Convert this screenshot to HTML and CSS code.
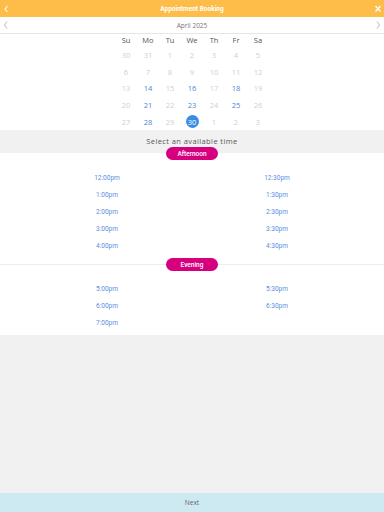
FILE: index.html
```html
<!DOCTYPE html>
<html lang="en">
<head>
  <meta charset="UTF-8">
  <title>Appointment Booking</title>
  <link rel="stylesheet" href="styles.css">
</head>
<body>
  <div class="app">
    <header class="topbar">
      <svg class="icon" width="8" height="10" viewBox="0 0 8 10"><polyline points="5.5,2 3,5 5.5,8" fill="none" stroke="#fff" stroke-width="1.1"/></svg>
      <span class="title">Appointment Booking</span>
      <svg class="icon" width="8" height="10" viewBox="0 0 8 10"><path d="M1.5 2 L6.5 7.5 M6.5 2 L1.5 7.5" stroke="#fff" stroke-width="1.3"/></svg>
    </header>

    <div class="month-bar">
      <svg width="8" height="10" viewBox="0 0 8 10"><polyline points="5,1.5 2.5,5 5,8.5" fill="none" stroke="#aaa" stroke-width="0.8"/></svg>
      <span>April 2025</span>
      <svg width="8" height="10" viewBox="0 0 8 10"><polyline points="3,1.5 5.5,5 3,8.5" fill="none" stroke="#aaa" stroke-width="0.8"/></svg>
    </div>

    <div class="calendar">
      <div class="wd">Su</div><div class="wd">Mo</div><div class="wd">Tu</div><div class="wd">We</div><div class="wd">Th</div><div class="wd">Fr</div><div class="wd">Sa</div>

      <div class="day">30</div><div class="day">31</div><div class="day">1</div><div class="day">2</div><div class="day">3</div><div class="day">4</div><div class="day">5</div>
      <div class="day">6</div><div class="day">7</div><div class="day">8</div><div class="day">9</div><div class="day">10</div><div class="day">11</div><div class="day">12</div>
      <div class="day">13</div><div class="day open">14</div><div class="day">15</div><div class="day open">16</div><div class="day">17</div><div class="day open">18</div><div class="day">19</div>
      <div class="day">20</div><div class="day open">21</div><div class="day">22</div><div class="day open">23</div><div class="day">24</div><div class="day open">25</div><div class="day">26</div>
      <div class="day">27</div><div class="day open">28</div><div class="day">29</div><div class="day"><span class="selected">30</span></div><div class="day">1</div><div class="day">2</div><div class="day">3</div>
    </div>

    <div class="band">Select an available time</div>
    <div class="divider divider-band"><span class="pill">Afternoon</span></div>

    <div class="slots">
      <a class="slot">12:00pm</a><a class="slot">12:30pm</a>
      <a class="slot">1:00pm</a><a class="slot">1:30pm</a>
      <a class="slot">2:00pm</a><a class="slot">2:30pm</a>
      <a class="slot">3:00pm</a><a class="slot">3:30pm</a>
      <a class="slot">4:00pm</a><a class="slot">4:30pm</a>
    </div>

    <div class="divider divider-line"><span class="pill">Evening</span></div>

    <div class="slots slots-last">
      <a class="slot">5:00pm</a><a class="slot">5:30pm</a>
      <a class="slot">6:00pm</a><a class="slot">6:30pm</a>
      <a class="slot">7:00pm</a>
    </div>

    <div class="filler"></div>

    <footer class="next-bar">Next</footer>
  </div>
</body>
</html>
```

FILE: styles.css
```css
body {
  margin: 0;
  font-family: "Open Sans", Arial, sans-serif;
  background: #f1f1f1;
}

.app {
  display: flex;
  flex-direction: column;
  height: 512px;
}

.topbar {
  height: 17px;
  background: #fdbd48;
  display: flex;
  align-items: center;
  justify-content: space-between;
  padding: 0 2px;
}

.topbar .title {
  color: #fff;
  font-family: Roboto, Arial, sans-serif;
  font-weight: bold;
  font-size: 6.5px;
}

.month-bar {
  height: 16px;
  background: #fff;
  border-bottom: 1px solid #e6e6e6;
  display: flex;
  align-items: center;
  justify-content: space-between;
  padding: 0 2px;
  font-size: 6.5px;
  color: #777;
}

.calendar {
  background: #fff;
  display: grid;
  grid-template-columns: repeat(7, 22px);
  grid-template-rows: 13px 16px 17px 16px 17px 17px;
  justify-content: center;
}

.wd {
  line-height: 13px;
  text-align: center;
  font-size: 7.5px;
  color: #555;
}

.day {
  display: flex;
  align-items: center;
  justify-content: center;
  font-size: 7.5px;
  color: #cfcfcf;
}

.day.open {
  color: #4a86d0;
}

.selected {
  width: 13px;
  height: 13px;
  border-radius: 50%;
  background: #3a8de0;
  color: #fff;
  display: flex;
  align-items: center;
  justify-content: center;
}

.band {
  background: #f1f1f1;
  height: 17px;
  box-sizing: border-box;
  padding-top: 5px;
  line-height: 12px;
  text-align: center;
  font-size: 7.5px;
  letter-spacing: 0.4px;
  color: #555;
}

.divider {
  height: 13px;
  display: flex;
  justify-content: center;
}

.divider-band {
  background: linear-gradient(to bottom, #f1f1f1 50%, #fff 50%);
}

.divider-line {
  background: linear-gradient(to bottom, #fff 6px, #ececec 6px, #ececec 7px, #fff 7px);
}

.pill {
  width: 52px;
  height: 13px;
  border-radius: 7px;
  background: #d6007f;
  color: #fff;
  font-family: Roboto, Arial, sans-serif;
  font-size: 6.5px;
  font-weight: 500;
  display: flex;
  align-items: center;
  justify-content: center;
}

.slots {
  background: #fff;
  display: grid;
  grid-template-columns: 1fr 1fr;
  grid-auto-rows: 17px;
  padding: 9px 22px 4px;
}

.slots-last {
  padding: 9px 22px 4px;
}

.slot {
  display: flex;
  align-items: center;
  justify-content: center;
  font-family: Roboto, Arial, sans-serif;
  font-size: 6.5px;
  color: #5a8ee0;
}

.filler {
  flex: 1;
  background: #f1f1f1;
}

.next-bar {
  height: 19px;
  background: #cde9f2;
  display: flex;
  align-items: center;
  justify-content: center;
  font-size: 6.5px;
  color: #666;
}
```
